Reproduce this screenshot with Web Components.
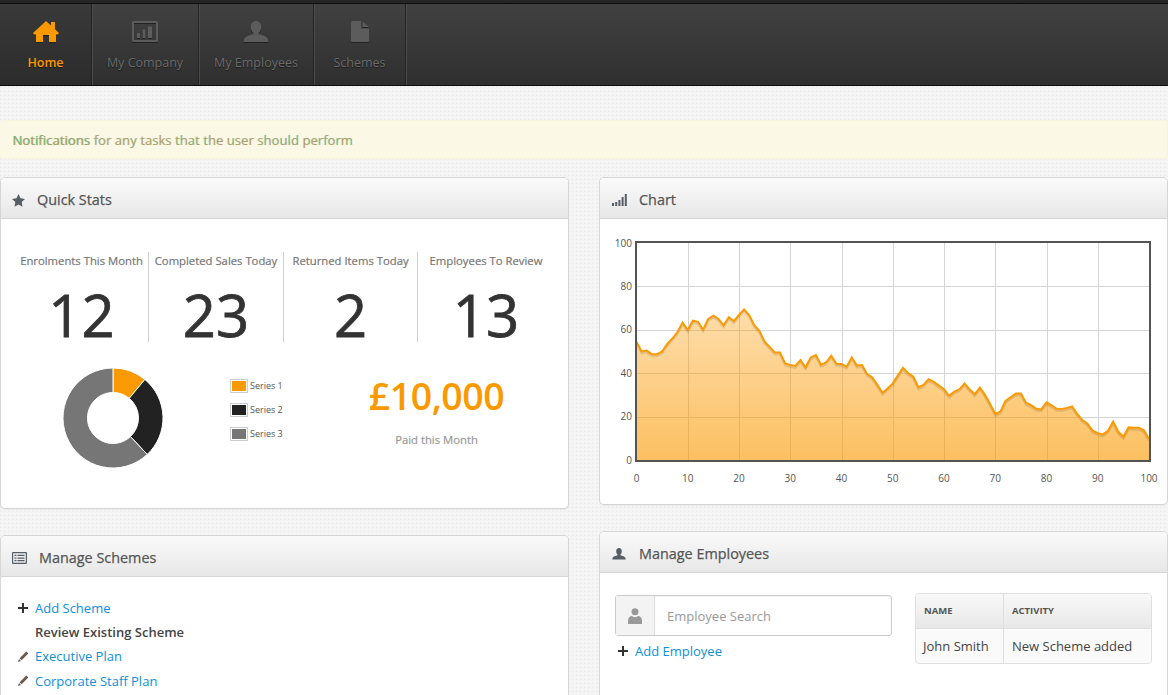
<!DOCTYPE html>
<html lang="en">
<head>
<meta charset="utf-8">
<title>Dashboard</title>
<style>
  html, body { margin: 0; height: 100%; overflow: hidden; }
  body {
    font-family: "Open Sans", "Liberation Sans", sans-serif;
    font-size: 13px;
    color: #555;
    background-color: #f4f4f4;
    background-image:
      linear-gradient(45deg, #eeeeee 25%, transparent 25%, transparent 75%, #eeeeee 75%),
      linear-gradient(45deg, #f8f8f8 25%, transparent 25%, transparent 75%, #f8f8f8 75%);
    background-size: 4px 4px;
    background-position: 0 0, 2px 2px;
  }
  app-notice span { text-shadow: -1px 0 0 rgba(30, 214, 140, .75); }
  [slot="right"] { --head-pad: 12px; }
</style>
</head>
<body>

<app-nav>
  <nav-item label="Home" icon="home" active style="width:91px"></nav-item>
  <nav-item label="My Company" icon="company" style="width:106px"></nav-item>
  <nav-item label="My Employees" icon="user" style="width:114px"></nav-item>
  <nav-item label="Schemes" icon="doc" style="width:91px"></nav-item>
</app-nav>

<app-notice><span>Notifications</span> for any tasks that the user should perform</app-notice>

<app-columns>
  <div slot="left">
    <app-panel heading="Quick Stats" icon="star" style="height:332px">
      <stats-row>
        <stat-cell label="Enrolments This Month" value="12"></stat-cell>
        <stat-cell label="Completed Sales Today" value="23"></stat-cell>
        <stat-cell label="Returned Items Today" value="2"></stat-cell>
        <stat-cell label="Employees To Review" value="13"></stat-cell>
      </stats-row>
      <stats-summary amount="£10,000" caption="Paid this Month"></stats-summary>
    </app-panel>
    <app-panel heading="Manage Schemes" icon="list" style="margin-top:26px;height:300px">
      <link-list>
        <link-row icon="plus" href="#">Add Scheme</link-row>
        <link-row strong>Review Existing Scheme</link-row>
        <link-row icon="pencil" href="#">Executive Plan</link-row>
        <link-row icon="pencil" href="#">Corporate Staff Plan</link-row>
      </link-list>
    </app-panel>
  </div>
  <div slot="right">
    <app-panel heading="Chart" icon="signal" style="height:328px">
      <area-chart></area-chart>
    </app-panel>
    <app-panel heading="Manage Employees" icon="userSmall" style="margin-top:26px;height:300px">
      <employee-tools></employee-tools>
    </app-panel>
  </div>
</app-columns>

<script>
  const USER_PATH = 'M13 0c3.400 0 5.200 2.500 5.200 5.800 0 2.600-1 4.700-2.500 6v1.400c3.500.9 8.300 2.200 9.300 5.200.3.900.3 1.800.3 2.600H.7c0-.8 0-1.700.3-2.600 1-3 5.800-4.300 9.300-5.200v-1.400c-1.500-1.300-2.500-3.400-2.500-6C7.800 2.500 9.600 0 13 0z';
  const ICONS = {
    home: '<svg viewBox="0 0 26 21" width="26" height="21"><path d="M13 0L18 4.500V1h4v7.200L26 12l-1 1.500h-2V21h-7v-7h-6v7H3v-7.500H1L0 12z"/></svg>',
    company: '<svg viewBox="0 0 26 21" width="26" height="21"><path fill-rule="evenodd" d="M1.500 0h23A1.500 1.500 0 0 1 26 1.500v18a1.500 1.500 0 0 1-1.500 1.500h-23A1.500 1.500 0 0 1 0 19.500v-18A1.500 1.500 0 0 1 1.500 0zM2 2v17h22V2zM5 12h3v5H5zM10.500 8.500h3V17h-3zM16 5.500h4V17h-4z"/></svg>',
    user: `<svg viewBox="0 0 26 21" width="26" height="21"><path d="${USER_PATH}"/></svg>`,
    userSmall: `<svg viewBox="0 0 26 21" width="14" height="11.500"><path d="${USER_PATH}"/></svg>`,
    doc: '<svg viewBox="0 0 18 21" width="18" height="21"><path d="M1.500 0H10v7.500h8v12a1.500 1.500 0 0 1-1.500 1.500h-15A1.500 1.500 0 0 1 0 19.500v-18A1.500 1.500 0 0 1 1.500 0zM11.500 0.500L18 6h-6.500z"/></svg>',
    star: '<svg viewBox="0 0 13 13" width="13" height="13"><path d="M6.500 0l2 4.300 4.500.6-3.300 3.200.8 4.700-4-2.300-4 2.300.8-4.700L0 4.900l4.500-.6z"/></svg>',
    signal: '<svg viewBox="0 0 15 12" width="15" height="12"><path d="M0 9h2v3H0zM3.200 8h2v4h-2zM6.400 6h2v6h-2zM9.600 3h2v9h-2zM12.800 0h2v12h-2z"/></svg>',
    list: '<svg viewBox="0 0 15 12" width="15" height="12"><path fill-rule="evenodd" d="M1 0h13a1 1 0 0 1 1 1v10a1 1 0 0 1-1 1H1a1 1 0 0 1-1-1V1a1 1 0 0 1 1-1zM1.200 1.200v9.600h12.600V1.200zM2.500 2.800h2v1.300h-2zM5.500 2.800h7v1.300h-7zM2.500 5.400h2v1.300h-2zM5.500 5.400h7v1.300h-7zM2.500 8h2v1.300h-2zM5.500 8h7v1.300h-7z"/></svg>',
    plus: '<svg viewBox="0 0 10 10" width="10" height="10"><path d="M4 0h2v4h4v2H6v4H4V6H0V4h4z"/></svg>',
    pencil: '<svg viewBox="0 0 11 11" width="11" height="11"><path d="M8.300 0.600l2 2L3.600 9.300 1.600 7.300zM1 8l2 2-3 1z"/></svg>',
    person: '<svg viewBox="0 0 14 16" width="14" height="16"><circle cx="7" cy="3.700" r="3.500"/><path d="M0 16v-3.500C0 9.500 2 8 4 8c1 .8 2 1.200 3 1.200S9 8.800 10 8c2 0 4 1.500 4 4.500V16z"/></svg>'
  };

  class AppNav extends HTMLElement {
    constructor() {
      super();
      this.attachShadow({ mode: 'open' }).innerHTML = `
        <style>
          :host { display: block; background: #262626; padding-top: 3px; }
          .bar {
            display: flex;
            height: 81px;
            border-top: 1px solid #0d0d0d;
            border-bottom: 1px solid #0d0d0d;
            background: linear-gradient(#414141, #2f2f2f);
          }
          .items { display: flex; box-shadow: inset 1px 0 0 #4a4a4a; }
        </style>
        <div class="bar"><div class="items"><slot></slot></div></div>`;
    }
  }

  class NavItem extends HTMLElement {
    connectedCallback() {
      const active = this.hasAttribute('active');
      const root = this.shadowRoot || this.attachShadow({ mode: 'open' });
      root.innerHTML = `
        <style>
          :host {
            display: flex;
            flex-direction: column;
            align-items: center;
            box-sizing: content-box;
            border-right: 1px solid #232323;
            box-shadow: 1px 0 0 #4c4c4c;
            ${active ? 'background: linear-gradient(#393939, #2c2c2c);' : ''}
          }
          svg { display: block; margin-top: 17px; fill: ${active ? '#fb9900' : '#5c5c5c'}; filter: drop-shadow(0 1px 0 #222); }
          span {
            margin-top: 12px;
            font: ${active ? 600 : 400} 12.5px/18px "Open Sans", sans-serif;
            color: ${active ? '#fb9900' : '#6a6a6a'};
            text-shadow: 0 1px 1px #1c1c1c;
          }
        </style>
        ${ICONS[this.getAttribute('icon')]}
        <span>${this.getAttribute('label')}</span>`;
    }
  }

  class AppNotice extends HTMLElement {
    constructor() {
      super();
      this.attachShadow({ mode: 'open' }).innerHTML = `
        <style>
          :host {
            display: block;
            margin: 34px 0 18px;
            height: 39px;
            box-sizing: border-box;
            padding: 0 13px;
            background: #fcf8e6;
            border: 1px solid #faf3dc;
            border-left: 0;
            border-radius: 4px;
            font: 13px/38px "Open Sans", sans-serif;
            letter-spacing: .07px;
            color: #b59a6c;
            text-shadow: -1px 0 0 rgba(40, 214, 150, .4);
          }
        </style>
        <slot></slot>`;
    }
  }

  class AppColumns extends HTMLElement {
    constructor() {
      super();
      this.attachShadow({ mode: 'open' }).innerHTML = `
        <style>
          :host { display: grid; grid-template-columns: 569px 569px; column-gap: 30px; }
        </style>
        <slot name="left"></slot>
        <slot name="right"></slot>`;
    }
  }

  class AppPanel extends HTMLElement {
    connectedCallback() {
      const root = this.shadowRoot || this.attachShadow({ mode: 'open' });
      const icon = this.getAttribute('icon');
      root.innerHTML = `
        <style>
          :host {
            display: block;
            box-sizing: border-box;
            background: #fff;
            border: 1px solid #d6d6d6;
            border-radius: 5px;
            overflow: hidden;
            box-shadow: 0 1px 1px rgba(0, 0, 0, .05);
          }
          header {
            display: flex;
            align-items: center;
            box-sizing: border-box;
            height: 41px;
            padding: 4px 0 0 var(--head-pad, 11px);
            background: linear-gradient(#fafafa, #e7e7e7);
            border-bottom: 1px solid #d6d6d6;
            font: 400 14.4px/20px "Open Sans", sans-serif;
            -webkit-text-stroke: .25px #555;
            color: #555;
          }
          .icon { display: flex; width: 25px; fill: #555d66; }
          header.wide .icon { width: 27px; }
        </style>
        <header class="${icon === 'star' ? '' : 'wide'}">
          <div class="icon">${ICONS[icon]}</div>
          <div>${this.getAttribute('heading')}</div>
        </header>
        <slot></slot>`;
    }
  }

  class StatsRow extends HTMLElement {
    constructor() {
      super();
      this.attachShadow({ mode: 'open' }).innerHTML = `
        <style>
          :host { display: grid; grid-template-columns: 134px 135px 134px 136px; margin: 33px 0 0 14px; }
        </style>
        <slot></slot>`;
    }
  }

  class StatCell extends HTMLElement {
    connectedCallback() {
      const root = this.shadowRoot || this.attachShadow({ mode: 'open' });
      root.innerHTML = `
        <style>
          :host {
            display: block;
            height: 90px;
            text-align: center;
            border-right: 1px solid #cfcfcf;
          }
          :host(:last-child) { border-right: 0; }
          .label {
            font: 400 11.300px/18px "Open Sans", sans-serif;
            -webkit-text-stroke: .2px #777;
            color: #777;
            white-space: nowrap;
          }
          .value {
            margin-top: 16px;
            font: 400 58px/58px "Open Sans", sans-serif;
            -webkit-text-stroke: .8px #333;
            color: #333;
          }
        </style>
        <div class="label">${this.getAttribute('label')}</div>
        <div class="value">${this.getAttribute('value')}</div>`;
    }
  }

  class StatsSummary extends HTMLElement {
    connectedCallback() {
      const root = this.shadowRoot || this.attachShadow({ mode: 'open' });
      const legend = [['Series 1', '#fb9900'], ['Series 2', '#222'], ['Series 3', '#767676']];
      root.innerHTML = `
        <style>
          :host {
            display: grid;
            grid-template-columns: 215px 111px 191px;
            margin: 26px 0 0 14px;
            height: 100px;
          }
          .donut { padding-left: 48px; }
          ul { list-style: none; margin: 6px 0 0; padding: 0; }
          li {
            display: flex;
            align-items: center;
            gap: 2px;
            height: 24px;
            font: 9px/14px "Open Sans", sans-serif;
            color: #555;
          }
          i { display: block; width: 16px; height: 12px; border: 1px solid #ccc; box-sizing: content-box; }
          i b { display: block; height: 10px; width: 14px; margin: 1px; }
          .money { text-align: center; }
          .amount { margin-top: 2px; font: 600 37.500px/52px "Open Sans", sans-serif; color: #fb9900; letter-spacing: -.5px; }
          .caption { margin-top: 9px; font: 400 11.300px/18px "Open Sans", sans-serif; -webkit-text-stroke: .2px #999; color: #999; }
        </style>
        <div class="donut"><donut-chart></donut-chart></div>
        <ul>${legend.map(([name, c]) => `<li><i><b style="background:${c}"></b></i>${name}</li>`).join('')}</ul>
        <div class="money">
          <div class="amount">${this.getAttribute('amount')}</div>
          <div class="caption">${this.getAttribute('caption')}</div>
        </div>`;
    }
  }

  class DonutChart extends HTMLElement {
    connectedCallback() {
      const root = this.shadowRoot || this.attachShadow({ mode: 'open' });
      const parts = [[11, '#fb9900'], [27, '#222222'], [62, '#767676']];
      const R = 50, r = 25.5;
      const pt = (rad, p) => {
        const a = p / 100 * 2 * Math.PI;
        return (50 + rad * Math.sin(a)).toFixed(2) + ' ' + (50 - rad * Math.cos(a)).toFixed(2);
      };
      let start = 0, paths = '';
      for (const [size, color] of parts) {
        const end = start + size, big = size > 50 ? 1 : 0;
        paths += `<path d="M${pt(R, start)}A${R} ${R} 0 ${big} 1 ${pt(R, end)}L${pt(r, end)}A${r} ${r} 0 ${big} 0 ${pt(r, start)}Z" fill="${color}" stroke="#fff" stroke-width="1"/>`;
        start = end;
      }
      root.innerHTML = `
        <style>:host { display: block; width: 100px; height: 100px; } svg { display: block; }</style>
        <svg viewBox="0 0 100 100" width="100" height="100">${paths}</svg>`;
    }
  }

  const SERIES = [54.5,50,50.4,48.7,48.7,50,53.5,56,59,63.3,59.9,64.2,63.7,60,65,66.5,65,62,65.8,64,66.8,69.4,66.7,62,59.4,54.5,52,49.5,49.5,44.5,43.8,43.3,46,42.7,47.3,48.4,43.8,45,48,44.4,44.2,43,47.3,43.5,43.8,39.6,38,34.6,31,33,35.3,39,42.5,40,38.4,33.5,34.6,37.2,36,34.3,32.6,29.6,31.5,32.6,35.2,32.6,30.3,33.3,30,25.8,21.2,22.3,27.2,28.9,30.6,30.6,26.4,25.3,23.6,23.3,26.6,25.2,23.6,23.5,24,24.7,21.2,18.4,16.7,13.5,12.4,11.8,13.5,17.7,13,10.7,15,14.9,14.9,13.7,9.8];

  class AreaChart extends HTMLElement {
    connectedCallback() {
      const root = this.shadowRoot || this.attachShadow({ mode: 'open' });
      // plot box, in the svg's own coordinates
      const x0 = 36.5, x1 = 549, y0 = 241, y1 = 24;
      const px = v => x0 + (x1 - x0) * v / 100;
      const py = v => y0 + (y1 - y0) * v / 100;
      let grid = '', labels = '';
      for (let v = 0; v <= 100; v += 10) {
        if (v > 0 && v < 100) grid += `<path d="M${Math.round(px(v)) + .5} ${y1}V${y0}"/>`;
        labels += `<text x="${px(v)}" y="263" text-anchor="middle">${v}</text>`;
      }
      for (let v = 0; v <= 100; v += 20) {
        if (v > 0 && v < 100) grid += `<path d="M${x0} ${Math.round(py(v)) + .5}H${x1}"/>`;
        labels += `<text x="32" y="${py(v) + 3.500}" text-anchor="end">${v}</text>`;
      }
      const line = SERIES.map((v, i) => `${px(i).toFixed(1)} ${py(v).toFixed(1)}`).join('L');
      root.innerHTML = `
        <style>
          :host { display: block; height: 285px; }
          svg { display: block; }
          .grid path { stroke: #d4d4d4; stroke-width: 1; fill: none; }
          text { font: 10px "Open Sans", sans-serif; fill: #555; }
        </style>
        <svg viewBox="0 0 567 285" width="567" height="285">
          <defs>
            <linearGradient id="fill" x1="0" y1="0" x2="0" y2="1">
              <stop offset="0" stop-color="#fb9900" stop-opacity=".33"/>
              <stop offset="1" stop-color="#fb9900" stop-opacity=".62"/>
            </linearGradient>
          </defs>
          <g class="grid">${grid}</g>
          <path d="M${line}L${x1} ${y0}L${x0} ${y0}Z" fill="url(#fill)" stroke="none"/>
          <path d="M${line}" fill="none" stroke="#000" stroke-opacity=".1" stroke-width="2" transform="translate(0 2)"/>
          <path d="M${line}" fill="none" stroke="#fb9900" stroke-width="2"/>
          <rect x="36" y="23" width="514" height="219" fill="none" stroke="#545454" stroke-width="2"/>
          ${labels}
        </svg>`;
    }
  }

  class LinkList extends HTMLElement {
    constructor() {
      super();
      this.attachShadow({ mode: 'open' }).innerHTML = `
        <style>:host { display: block; padding: 19px 0 0 17px; }</style>
        <slot></slot>`;
    }
  }

  class LinkRow extends HTMLElement {
    connectedCallback() {
      const root = this.shadowRoot || this.attachShadow({ mode: 'open' });
      const icon = this.getAttribute('icon');
      const strong = this.hasAttribute('strong');
      const label = strong ? '<slot></slot>' : '<a href="#"><slot></slot></a>';
      root.innerHTML = `
        <style>
          :host {
            display: flex;
            align-items: center;
            height: 24.2px;
            font: ${strong ? 600 : 400} 13px/24px "Open Sans", sans-serif;
            color: #444;
          }
          .icon { display: flex; width: 17px; fill: ${icon === 'plus' ? '#333' : '#6b5a4d'}; }
          a { color: #0d8fd8; text-decoration: none; }
        </style>
        <div class="icon">${icon ? ICONS[icon] : ''}</div>
        ${label}`;
    }
  }

  class EmployeeTools extends HTMLElement {
    connectedCallback() {
      const root = this.shadowRoot || this.attachShadow({ mode: 'open' });
      root.innerHTML = `
        <style>
          :host {
            display: grid;
            grid-template-columns: 277px 237px;
            column-gap: 23px;
            padding: 20px 0 0 15px;
          }
          .search {
            display: flex;
            height: 41px;
            margin-top: 2px;
            box-sizing: border-box;
            border: 1px solid #ccc;
            border-radius: 3px;
            box-shadow: inset 0 1px 1px rgba(0, 0, 0, .06);
          }
          .addon {
            display: flex;
            align-items: center;
            justify-content: center;
            width: 38px;
            border-right: 1px solid #ddd;
            background: #f3f3f3;
            fill: #999;
          }
          .ph { padding-left: 12px; font: 13px/41px "Open Sans", sans-serif; color: #999; }
          link-row { margin: 3px 0 0 3px; }
          table {
            width: 100%;
            height: 71px;
            border-collapse: separate;
            border-spacing: 0;
            border: 1px solid #dfdfdf;
            border-radius: 4px;
            overflow: hidden;
            background: #fafafa;
          }
          th {
            height: 34px;
            padding: 0 8px;
            text-align: left;
            font: 700 9.500px/14px "Open Sans", sans-serif;
            text-transform: uppercase;
            color: #555;
            background: linear-gradient(#f8f8f8, #e8e8e8);
            border-bottom: 1px solid #dfdfdf;
          }
          td { padding: 0 8px; font: 13px/18px "Open Sans", sans-serif; color: #444; }
          td:first-child { padding-left: 7px; }
          th:first-child, td:first-child { width: 71px; border-right: 1px solid #dfdfdf; }
        </style>
        <div>
          <div class="search">
            <div class="addon">${ICONS.person}</div>
            <div class="ph">Employee Search</div>
          </div>
          <link-row icon="plus" href="#">Add Employee</link-row>
        </div>
        <table>
          <tr><th>Name</th><th>Activity</th></tr>
          <tr><td>John Smith</td><td>New Scheme added</td></tr>
        </table>`;
    }
  }

  customElements.define('app-nav', AppNav);
  customElements.define('nav-item', NavItem);
  customElements.define('app-notice', AppNotice);
  customElements.define('app-columns', AppColumns);
  customElements.define('app-panel', AppPanel);
  customElements.define('stats-row', StatsRow);
  customElements.define('stat-cell', StatCell);
  customElements.define('stats-summary', StatsSummary);
  customElements.define('donut-chart', DonutChart);
  customElements.define('area-chart', AreaChart);
  customElements.define('link-list', LinkList);
  customElements.define('link-row', LinkRow);
  customElements.define('employee-tools', EmployeeTools);
</script>
</body>
</html>
